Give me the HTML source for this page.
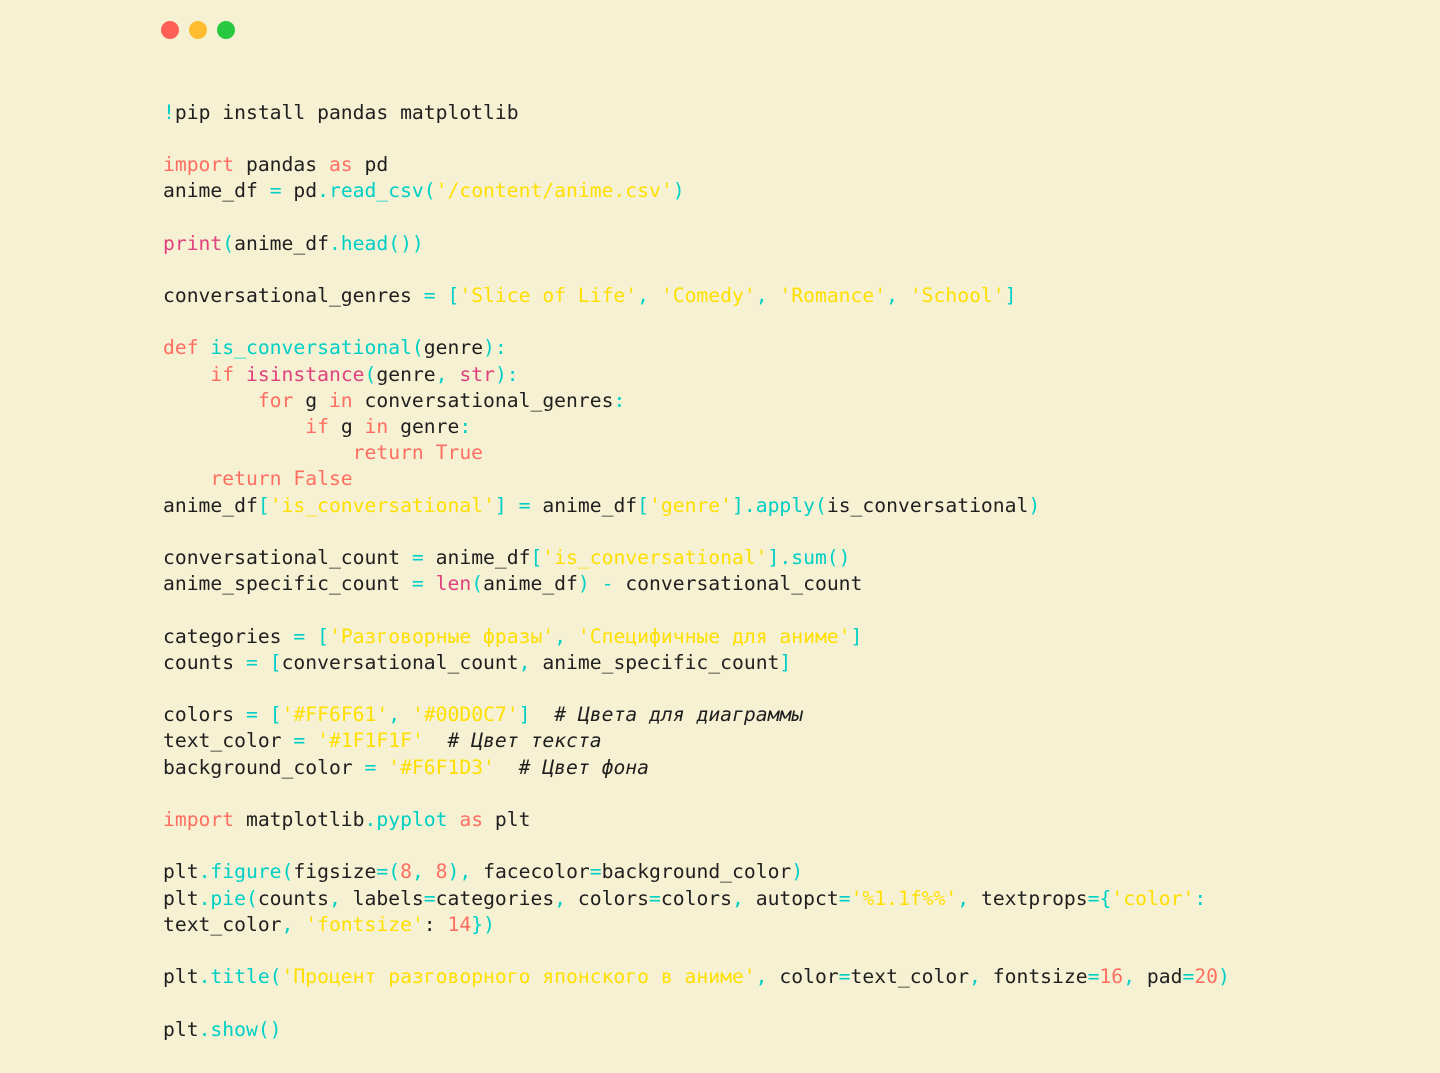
<!DOCTYPE html>
<html><head><meta charset="utf-8"><style>
html,body{margin:0;padding:0;background:#F6F1D3;width:1440px;height:1073px;overflow:hidden}
.d{position:absolute;top:21px;width:18px;height:18px;border-radius:50%}
pre{position:absolute;left:163px;top:99.5px;margin:0;font-family:"DejaVu Sans Mono","Liberation Mono",monospace;font-size:19.7px;line-height:26.2px;color:#1F1F1F}
.k{color:#FF6F61}.c{color:#00CFC6}.s{color:#FFDF00}.b{color:#E0407C}.n{color:#FF6F61}.m{font-style:italic;color:#1F1F1F}
</style></head><body>
<div class="d" style="left:161px;background:#FF5F57"></div>
<div class="d" style="left:189px;background:#FEBC2E"></div>
<div class="d" style="left:217px;background:#28C840"></div>
<pre><span class="c">!</span>pip install pandas matplotlib

<span class="k">import</span> pandas <span class="k">as</span> pd
anime_df <span class="c">=</span> pd<span class="c">.read_csv(</span><span class="s">'/content/anime.csv'</span><span class="c">)</span>

<span class="b">print</span><span class="c">(</span>anime_df<span class="c">.head())</span>

conversational_genres <span class="c">=</span> <span class="c">[</span><span class="s">'Slice of Life'</span><span class="c">,</span> <span class="s">'Comedy'</span><span class="c">,</span> <span class="s">'Romance'</span><span class="c">,</span> <span class="s">'School'</span><span class="c">]</span>

<span class="k">def</span> <span class="c">is_conversational(</span>genre<span class="c">):</span>
    <span class="k">if</span> <span class="b">isinstance</span><span class="c">(</span>genre<span class="c">,</span> <span class="b">str</span><span class="c">):</span>
        <span class="k">for</span> g <span class="k">in</span> conversational_genres<span class="c">:</span>
            <span class="k">if</span> g <span class="k">in</span> genre<span class="c">:</span>
                <span class="k">return True</span>
    <span class="k">return False</span>
anime_df<span class="c">[</span><span class="s">'is_conversational'</span><span class="c">]</span> <span class="c">=</span> anime_df<span class="c">[</span><span class="s">'genre'</span><span class="c">].apply(</span>is_conversational<span class="c">)</span>

conversational_count <span class="c">=</span> anime_df<span class="c">[</span><span class="s">'is_conversational'</span><span class="c">].sum()</span>
anime_specific_count <span class="c">=</span> <span class="b">len</span><span class="c">(</span>anime_df<span class="c">)</span> <span class="c">-</span> conversational_count

categories <span class="c">=</span> <span class="c">[</span><span class="s">'Разговорные фразы'</span><span class="c">,</span> <span class="s">'Специфичные для аниме'</span><span class="c">]</span>
counts <span class="c">=</span> <span class="c">[</span>conversational_count<span class="c">,</span> anime_specific_count<span class="c">]</span>

colors <span class="c">=</span> <span class="c">[</span><span class="s">'#FF6F61'</span><span class="c">,</span> <span class="s">'#00D0C7'</span><span class="c">]</span>  <span class="m"># Цвета для диаграммы</span>
text_color <span class="c">=</span> <span class="s">'#1F1F1F'</span>  <span class="m"># Цвет текста</span>
background_color <span class="c">=</span> <span class="s">'#F6F1D3'</span>  <span class="m"># Цвет фона</span>

<span class="k">import</span> matplotlib<span class="c">.pyplot</span> <span class="k">as</span> plt

plt<span class="c">.figure(</span>figsize<span class="c">=(</span><span class="n">8</span><span class="c">,</span> <span class="n">8</span><span class="c">),</span> facecolor<span class="c">=</span>background_color<span class="c">)</span>
plt<span class="c">.pie(</span>counts<span class="c">,</span> labels<span class="c">=</span>categories<span class="c">,</span> colors<span class="c">=</span>colors<span class="c">,</span> autopct<span class="c">=</span><span class="s">'%1.1f%%'</span><span class="c">,</span> textprops<span class="c">={</span><span class="s">'color'</span><span class="c">:</span>
text_color<span class="c">,</span> <span class="s">'fontsize'</span>: <span class="n">14</span><span class="c">})</span>

plt<span class="c">.title(</span><span class="s">'Процент разговорного японского в аниме'</span><span class="c">,</span> color<span class="c">=</span>text_color<span class="c">,</span> fontsize<span class="c">=</span><span class="n">16</span><span class="c">,</span> pad<span class="c">=</span><span class="n">20</span><span class="c">)</span>

plt<span class="c">.show()</span></pre>
</body></html>
